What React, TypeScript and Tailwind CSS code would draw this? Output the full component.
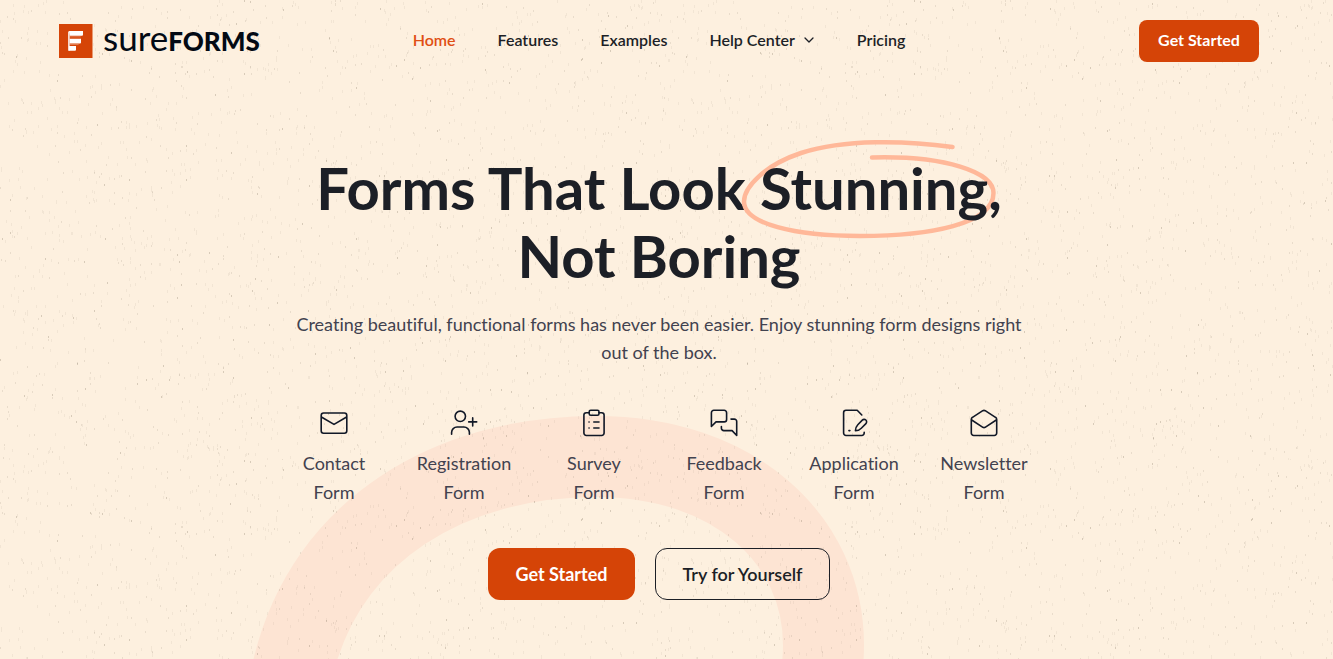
import React from "react";

type Form = { name: string; icon: React.ReactNode };

const TILE_W = 670;
const TILE_H = 460;

function makeSpecks(seed: number, count: number, height: number) {
  let s = seed;
  const next = () => {
    s = (s * 1664525 + 1013904223) % 4294967296;
    return s / 4294967296;
  };
  let d = "";
  for (let i = 0; i < count; i++) {
    const x = Math.floor(next() * TILE_W);
    const y = Math.floor(next() * TILE_H);
    d += `M${x} ${y}h1v${height}h-1z`;
  }
  return d;
}

const faintSpecks = makeSpecks(11, 1600, 3);
const mediumSpecks = makeSpecks(47, 650, 2);
const darkSpecks = makeSpecks(93, 150, 2);

function PaperGrain() {
  return (
    <svg className="pointer-events-none absolute inset-0 h-full w-full" aria-hidden="true">
      <defs>
        <pattern id="grain" width={TILE_W} height={TILE_H} patternUnits="userSpaceOnUse">
          <path d={faintSpecks} fill="#8a7a62" fillOpacity="0.09" />
          <path d={mediumSpecks} fill="#7a6c58" fillOpacity="0.15" />
          <path d={darkSpecks} fill="#6b5f4e" fillOpacity="0.26" />
        </pattern>
      </defs>
      <rect width="100%" height="100%" fill="url(#grain)" />
    </svg>
  );
}

function Ring() {
  return (
    <svg
      className="pointer-events-none absolute top-[410px] left-1/2 -ml-[409px] h-[260px] w-[620px]"
      viewBox="250 410 620 260"
      fill="none"
      aria-hidden="true"
    >
      <path
        d="M281 715 C286 695 289 685 293.500 666 C327 530 450 456.500 596 456.500 C735 456.500 823.500 540 823.500 645 C823.500 665 820 690 815 715"
        stroke="#fde4d3"
        strokeWidth="81"
      />
    </svg>
  );
}

function Icon({ children }: { children: React.ReactNode }) {
  return (
    <svg
      className="size-8"
      viewBox="0 0 32 32"
      fill="none"
      stroke="#111827"
      strokeWidth="1.6"
      strokeLinecap="round"
      strokeLinejoin="round"
      aria-hidden="true"
    >
      {children}
    </svg>
  );
}

const forms: Form[] = [
  {
    name: "Contact",
    icon: (
      <Icon>
        <rect x="3.2" y="6" width="25.6" height="20.2" rx="2.4" />
        <path d="M3.8 10.2 16 17.4 28.2 10.2" />
      </Icon>
    ),
  },
  {
    name: "Registration",
    icon: (
      <Icon>
        <circle cx="12.3" cy="9.3" r="5.2" />
        <path d="M3.6 27.2V25.500a5.500 5.500 0 0 1 5.500-5.500h6.800a5.500 5.500 0 0 1 5.500 5.500v1.700M24.700 10.900v8M20.700 14.900h8" />
      </Icon>
    ),
  },
  {
    name: "Survey",
    icon: (
      <Icon>
        <path d="M11.200 5.700H8.300a2.400 2.400 0 0 0-2.400 2.400v18a2.400 2.400 0 0 0 2.400 2.400h15.400a2.400 2.400 0 0 0 2.400-2.400v-18a2.400 2.400 0 0 0-2.400-2.400h-2.900" />
        <rect x="11.200" y="3.300" width="9.800" height="4.900" rx="1.500" />
        <path d="M11 15h.1M11 21h.1M15.800 15h5.200M15.800 21h5.200" />
      </Icon>
    ),
  },
  {
    name: "Feedback",
    icon: (
      <Icon>
        <path d="M3.400 19.500V5.700a2.400 2.400 0 0 1 2.400-2.400h10.400a2.400 2.400 0 0 1 2.400 2.400v6.800a2.400 2.400 0 0 1-2.400 2.400H8z" />
        <path d="M23 12.100h3.300a2.400 2.400 0 0 1 2.400 2.400v14l-4.600-4.900h-8.300a2.400 2.400 0 0 1-2.400-2.400v-1.700" />
      </Icon>
    ),
  },
  {
    name: "Application",
    icon: (
      <Icon>
        <path d="M23.800 8 19.200 3.300H8a2.400 2.400 0 0 0-2.400 2.400v20.400A2.400 2.400 0 0 0 8 28.500h15.800a2.400 2.400 0 0 0 2.400-2.400v-.8" />
        <path d="M17.400 23.700c0-2.200.8-4.300 2.400-6l4.500-4.600a2.500 2.500 0 0 1 3.600 3.500l-4.600 4.600a8 8 0 0 1-5.900 2.500z" />
        <path d="M10.900 23.600h1" />
      </Icon>
    ),
  },
  {
    name: "Newsletter",
    icon: (
      <Icon>
        <path d="M3.300 12.400a2.400 2.400 0 0 1 1.200-2.100L14.800 3.700a2.400 2.400 0 0 1 2.400 0l10.300 6.600a2.400 2.400 0 0 1 1.200 2.100v13.700a2.400 2.400 0 0 1-2.400 2.400H5.700a2.400 2.400 0 0 1-2.400-2.400z" />
        <path d="M3.700 13 14.900 20.300a2.200 2.200 0 0 0 2.200 0L28.300 13" />
      </Icon>
    ),
  },
];

function Logo() {
  return (
    <a href="#" className="flex items-start gap-[10px] text-[#030a14]" aria-label="sureFORMS">
      <svg className="h-[34px] w-[34px]" viewBox="0 0 34 34" aria-hidden="true">
        <path fill="#d54407" d="M0 0h33.500v34h-33.500z" />
        <path
          fill="#fff"
          d="M10 7h14v3.700a1 1 0 0 1-1 1h-12.200zM10.600 14.700h11.400v3.700a1 1 0 0 1-1 1h-10.400zM10 22h7v3.800a1 1 0 0 1-1 1h-6z"
        />
        <path fill="#fff" d="M9.200 7.500h1.400v19.300h-1.400z" />
        <path fill="#fff" fillOpacity="0.4" d="M10.600 12.500h11v.8h-11zM10.600 20.300h9v.8h-9z" />
      </svg>
      <span className="flex items-baseline leading-[26px]">
        <span className="text-[35px] font-normal">sure</span>
        <span className="text-[26px] font-black">FORMS</span>
      </span>
    </a>
  );
}

function Header() {
  return (
    <header className="mx-auto flex h-[82px] w-full max-w-[1200px] items-center">
      <div className="flex flex-1 justify-start">
        <Logo />
      </div>
      <nav className="flex items-center gap-[42px] pb-[2px] text-[16px] leading-6 font-semibold text-[#1c1f26]">
        <a href="#" className="text-[#e04f14]">Home</a>
        <a href="#">Features</a>
        <a href="#">Examples</a>
        <a href="#" className="flex items-center gap-2">
          Help Center
          <svg className="size-3" viewBox="0 0 12 12" fill="none" stroke="currentColor" strokeWidth="1.300" strokeLinecap="round" strokeLinejoin="round" aria-hidden="true">
            <path d="M2 4l4 4 4-4" />
          </svg>
        </a>
        <a href="#">Pricing</a>
      </nav>
      <div className="flex flex-1 justify-end">
        <button type="button" className="h-[42px] w-[120px] rounded-lg bg-[#d54407] pb-[2px] text-[16px] font-bold text-white">
          Get Started
        </button>
      </div>
    </header>
  );
}

export default function App() {
  return (
    <div className="relative min-h-screen overflow-hidden bg-[#fdf0df] pr-[15px] font-['Lato',sans-serif] [font-variant-ligatures:none]">
      <div className="relative">
        <Ring />
      </div>
      <PaperGrain />
      <div className="relative">
        <Header />
        <main className="mx-auto flex max-w-[780px] flex-col items-center pt-[72px] pb-[59px] text-center">
          <h1 className="text-[58px] leading-[68px] font-bold text-[#1c1f26]">
            Forms That Look{" "}
            <span className="relative inline-block">
              <svg
                className="absolute -top-4 -left-[19px] h-[102px] w-[256px]"
                viewBox="741 138 256 102"
                fill="none"
                aria-hidden="true"
              >
                <path
                  d="M952.500 147C905 140.500 845 139 801 153C765 165 744 187 744 201.500C744 224 795 236 860 236C930 236 993.500 224 993.500 193C993.500 172 945 155.500 872 157.500"
                  stroke="#ffb899"
                  strokeWidth="4.500"
                  strokeLinecap="round"
                />
              </svg>
              <span className="relative">Stunning,</span>
            </span>
            <br />
            Not Boring
          </h1>
          <p className="mt-5 max-w-[744px] text-[18px] leading-7 text-[#42424f]">
            Creating beautiful, functional forms has never been easier. Enjoy stunning form designs right out of the box.
          </p>
          <ul className="mt-[41px] grid w-full grid-cols-6">
            {forms.map((form) => (
              <li key={form.name} className="flex flex-col items-center gap-[10px]">
                {form.icon}
                <span className="text-[18px] leading-[29px] text-[#42424f]">
                  {form.name}
                  <br />
                  Form
                </span>
              </li>
            ))}
          </ul>
          <div className="mt-[41px] flex gap-5 text-[18px]">
            <button type="button" className="h-[52px] w-[147px] rounded-xl bg-[#d54407] font-bold text-white">
              Get Started
            </button>
            <button type="button" className="h-[52px] w-[175px] rounded-xl border border-[#1c1f26] font-semibold text-[#1c1f26]">
              Try for Yourself
            </button>
          </div>
        </main>
      </div>
    </div>
  );
}
